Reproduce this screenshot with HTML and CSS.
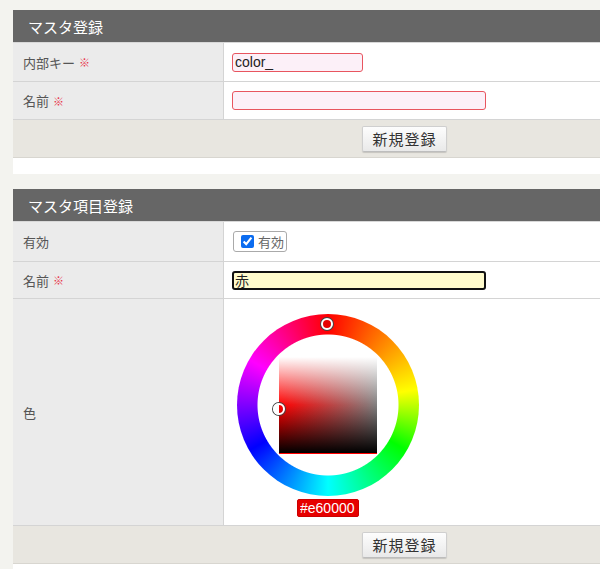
FILE: index.html
```html
<!DOCTYPE html>
<html lang="ja">
<head>
<meta charset="utf-8">
<title>マスタ登録</title>
<link rel="stylesheet" href="styles.css">
</head>
<body>
<section class="panel">
  <h2 class="panel-head">マスタ登録</h2>
  <div class="form">
    <div class="row r1">
      <div class="label">内部キー <span class="req">※</span></div>
      <div class="value"><input class="txt txt-short err" type="text" value="color_"></div>
    </div>
    <div class="row r2">
      <div class="label">名前 <span class="req">※</span></div>
      <div class="value"><input class="txt txt-long err" type="text" value=""></div>
    </div>
    <div class="foot"><button class="btn" type="button">新規登録</button></div>
  </div>
</section>

<section class="panel">
  <h2 class="panel-head">マスタ項目登録</h2>
  <div class="form">
    <div class="row r3">
      <div class="label">有効</div>
      <div class="value"><label class="chk"><input type="checkbox" checked> 有効</label></div>
    </div>
    <div class="row r4">
      <div class="label">名前 <span class="req">※</span></div>
      <div class="value"><input class="txt txt-long focus" type="text" value="赤"></div>
    </div>
    <div class="row r5">
      <div class="label">色</div>
      <div class="value picker-cell">
        <div class="picker">
          <div class="wheel">
            <div class="sq"></div>
            <span class="mk mk-hue"></span>
            <span class="mk mk-sl"></span>
          </div>
          <input class="hex" type="text" value="#e60000">
        </div>
      </div>
    </div>
    <div class="foot"><button class="btn" type="button">新規登録</button></div>
  </div>
</section>
</body>
</html>
```

FILE: styles.css
```css
html { overflow: hidden; }
body {
  margin: 0;
  padding: 10px 0 0 13px;
  background: #f3f3ef;
  font-family: "Noto Sans CJK JP", "Noto Sans", sans-serif;
  font-size: 13px;
  color: #555;
}
.panel {
  background: #fff;
  padding-bottom: 16px;
  margin-bottom: 15px;
}
.panel-head {
  margin: 0;
  height: 33px;
  line-height: 33px;
  padding-left: 15px;
  background: #666;
  color: #fff;
  font-size: 15px;
  font-weight: normal;
  border-bottom: 1px solid #d8d8d8;
  box-sizing: border-box;
}
.row {
  display: grid;
  grid-template-columns: 211px 1fr;
  border-bottom: 1px solid #d4d4d4;
  box-sizing: border-box;
}
.r1 { height: 39px; }
.r2 { height: 38px; }
.r3 { height: 40px; }
.r4 { height: 37px; }
.r5 { height: 227px; }
.label {
  background: #ebebeb;
  border-right: 1px solid #d4d4d4;
  display: flex;
  align-items: center;
  padding-left: 10px;
  gap: 4px;
}
.req { color: #e8334a; font-size: 11px; }
.value {
  display: flex;
  align-items: center;
  padding-left: 8px;
}
.txt {
  box-sizing: border-box;
  height: 19px;
  border-radius: 3px;
  padding: 0 2px;
  font-family: "Liberation Sans", Arial, sans-serif;
  font-size: 14px;
  color: #222;
  outline: none;
}
.txt-short { width: 131px; }
.txt-long { width: 254px; }
.err {
  border: 1px solid #e8555f;
  background: #fcf0f8;
}
.focus {
  border: 2px solid #111;
  background: #fffbcc;
  padding: 0 1px;
  font-family: "Noto Sans CJK JP", sans-serif;
  font-size: 14px;
  line-height: 15px;
}
.foot {
  height: 37px;
  background: #e8e6e0;
  border-bottom: 1px solid #d8d6d0;
  display: flex;
  align-items: center;
  padding-left: 349px;
}
.btn {
  width: 85px;
  height: 26px;
  border: 1px solid #cfcfcf;
  border-bottom-color: #bdbdbd;
  border-radius: 2px;
  background: linear-gradient(#fdfdfd, #e9e9e9);
  box-shadow: 0 1px 1px rgba(0,0,0,0.15);
  font-family: "Noto Sans CJK JP", sans-serif;
  font-size: 15px;
  letter-spacing: 1px;
  color: #333;
  padding: 0;
}
.chk {
  box-sizing: border-box;
  height: 21px;
  width: 54px;
  margin-left: 1px;
  border: 1px solid #aaa;
  border-radius: 3px;
  display: flex;
  align-items: center;
  gap: 4px;
  padding-left: 7px;
  color: #666;
  font-size: 13px;
}
.chk input {
  margin: 0;
  width: 13px;
  height: 13px;
  accent-color: #0b6cf0;
}
.picker-cell {
  align-items: flex-start;
  padding-left: 13px;
  padding-top: 15px;
}
.picker {
  display: flex;
  flex-direction: column;
  align-items: center;
  gap: 3px;
}
.wheel {
  position: relative;
  width: 182px;
  height: 182px;
  border-radius: 50%;
  background:
    radial-gradient(circle, #fff 0 70px, transparent 71px),
    conic-gradient(#ff0000, #ff8000, #ffff00, #00ff00 120deg, #00ffff 180deg, #0000ff 240deg, #ff00ff 300deg, #ff0000);
  display: grid;
  place-items: center;
}
.sq {
  width: 98px;
  height: 96px;
  border-bottom: 1px solid #f00;
  background:
    linear-gradient(to bottom, #fff 0%, rgba(255,255,255,0) 50%, rgba(0,0,0,0) 50%, #000 100%),
    linear-gradient(to right, #ff0000, #808080);
}
.mk {
  position: absolute;
  width: 8px;
  height: 8px;
  border-radius: 50%;
  border: 2px solid #fff;
  box-shadow: 0 0 0 1px #444;
}
.mk-hue {
  left: 84px;
  top: 4px;
  background: #e60000;
}
.mk-sl {
  left: 36px;
  top: 89px;
  background: transparent;
}
.hex {
  box-sizing: border-box;
  width: 62px;
  height: 18px;
  border: 1px solid #c00;
  border-radius: 2px;
  background: #e60000;
  color: #fff;
  font-family: "Liberation Sans", Arial, sans-serif;
  font-size: 14px;
  padding: 0 2px;
  outline: none;
}
```
